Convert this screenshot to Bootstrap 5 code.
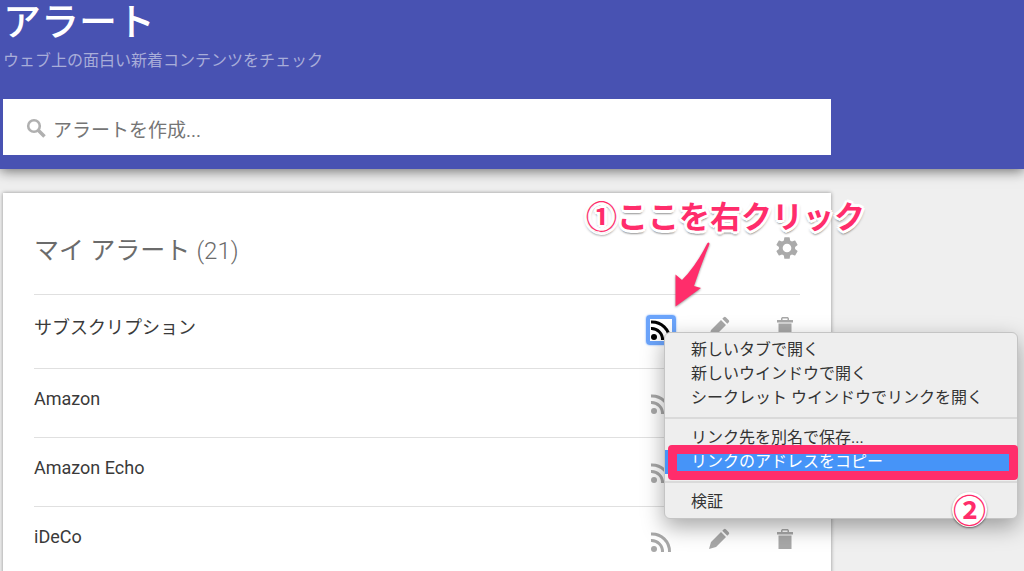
<!DOCTYPE html>
<html lang="ja">
<head>
<meta charset="utf-8">
<meta name="viewport" content="width=device-width, initial-scale=1">
<title>アラート</title>
<link href="https://cdn.jsdelivr.net/npm/bootstrap@5.3.0/dist/css/bootstrap.min.css" rel="stylesheet">
<style>
  :root { --pink: #ff2d6b; --column: 81.1%; }
  body { background: #efefef; color: #333; font-family: Roboto, "Noto Sans CJK JP", sans-serif; }
  .masthead { background: #4852b2; padding: 0 0 14px 3px; box-shadow: 0 2px 12px rgba(0,0,0,.55); z-index: 1; }
  .masthead h1 { font-size: 38px; line-height: 44px; font-weight: 500; }
  .masthead p { font-size: 16px; line-height: 24px; margin: 5px 0 26px; color: #a8add9; }
  .search-bar { width: var(--column); height: 56px; padding-left: 23px; gap: 7px; }
  .search-bar svg { margin-top: 2px; }
  .search-bar input { font-size: 19px; line-height: 28px; color: #444; padding: 8px 0 0; }
  .search-bar input::placeholder { color: #757575; opacity: 1; }
  .page-body { padding: 24px 0 0 3px; }
  .panel { width: var(--column); padding: 0 31px; box-shadow: 0 0 4px rgba(0,0,0,.4); }
  .panel-head { height: 101px; padding: 42px 0 0; }
  .panel-head h2 { font-size: 25px; line-height: 32px; font-weight: 400; color: #6b6b6b; }
  .panel-head .count { font-size: 24px; font-weight: 300; }
  .gear { color: #aaa; width: 26px; height: 26px; line-height: 0; }
  .alert-row { height: 69px; border-top: 1px solid #e0e0e0; }
  .alert-row.first-row { height: 74px; }
  .alert-name { font-size: 18px; line-height: 24px; padding-top: 18px; color: #3a3a3a; }
  .first-row .alert-name { padding-top: 21px; }
  .row-tools { gap: 32px; padding-top: 20px; }
  .tool { width: 30px; height: 30px; color: #a8a8a8; line-height: 0; border-radius: 4px; }
  .tool.edit, .tool.trash { padding-bottom: 6px !important; }
  .tool.edit { text-align: left; }
  .tool.focused { color: #000; border: 4px solid #6ba4fb !important; box-shadow: 0 0 2px #6ba4fb; }
  .ctx-menu { left: 18px; top: 17px; width: 354px; padding: 5px 0 4px; background: #eee; border: 1px solid #c4c4c4; border-radius: 6px; box-shadow: 0 8px 22px rgba(0,0,0,.35); z-index: 5; }
  .ctx-menu button { display: block; height: 24px; padding: 0 0 0 26px; font-size: 16px; line-height: 24px; color: #333; }
  .ctx-menu hr { margin: 7px 0; border-top: 2px solid #dadada; opacity: 1; }
  .ctx-menu .chosen button { background: #4694f8; color: #fff; }
  .ctx-menu .chosen::after { content: ""; position: absolute; inset: -5px -1px -6px 3px; border: 9px solid var(--pink); border-radius: 4px; pointer-events: none; }
  .note { color: var(--pink); font-family: "Noto Sans CJK JP", sans-serif; font-weight: 700; }
  .note-one { left: -60px; top: -122px; font-size: 31px; line-height: 44px; z-index: 6;
    text-shadow: 3px 0 #fff, -3px 0 #fff, 0 3px #fff, 0 -3px #fff, 2px 2px #fff, -2px 2px #fff, 2px -2px #fff, -2px -2px #fff, 0 4px 2px rgba(0,0,0,.35), 2px 2px 3px rgba(0,0,0,.3), -2px 2px 3px rgba(0,0,0,.3); }
  .note-arrow { left: 24px; top: -75px; filter: drop-shadow(0 1px 1px rgba(0,0,0,.4)); }
  .note-two { right: 30px; bottom: -9px; width: 35px; height: 35px; font-size: 33px; line-height: 34px; background: #fff; box-shadow: 0 1px 2px rgba(0,0,0,.5); }
</style>
</head>
<body class="vh-100 d-flex flex-column overflow-hidden">

<svg class="d-none" aria-hidden="true">
  <symbol id="rss" viewBox="0 0 22 22"><circle cx="4" cy="18" r="3" fill="currentColor"/><path d="M1 9.500A11 11 0 0 1 12.500 21M1 3A17.500 17.500 0 0 1 19.500 21" fill="none" stroke="currentColor" stroke-width="3"/></symbol>
  <symbol id="pencil" viewBox="0 0 22 22"><path d="M1 21l2-7L13 4l5 5L8 19zM14.300 2.700l1.500-1.500q1-.9 2 0l3 3q.9 1 0 2l-1.500 1.500z" fill="currentColor"/></symbol>
  <symbol id="bin" viewBox="0 0 16 21"><path d="M5 0h6l1 1.500V3h4v2.500H0V3h4V1.500zM5.500 1.500V3h5V1.500zM1.500 6.500h13V20h-13z" fill="currentColor" fill-rule="evenodd"/></symbol>
</svg>

<header class="masthead position-relative">
  <h1 class="text-white m-0">アラート</h1>
  <p>ウェブ上の面白い新着コンテンツをチェック</p>
  <form class="search-bar bg-white d-flex align-items-center" role="search">
    <svg width="20" height="20" viewBox="0 0 20 20" fill="none" stroke="#b0b0b0" aria-hidden="true"><circle cx="8" cy="8" r="5.800" stroke-width="2.600"/><path d="M12 12l6.500 6.500" stroke-width="3.600"/></svg>
    <input class="flex-grow-1 border-0 bg-transparent" type="text" aria-label="アラートを作成" placeholder="アラートを作成...">
  </form>
</header>

<main class="page-body flex-grow-1 d-flex">
  <section class="panel bg-white">
    <div class="panel-head d-flex justify-content-between align-items-start">
      <h2 class="m-0">マイ アラート <span class="count">(21)</span></h2>
      <button class="gear btn border-0 p-0" type="button" aria-label="設定">
        <svg width="26" height="26" viewBox="0 0 24 24" fill="currentColor"><path d="M19.430 12.980c.04-.32.07-.64.07-.98s-.03-.66-.07-.98l2.110-1.650c.19-.15.24-.42.12-.64l-2-3.460c-.12-.22-.39-.3-.61-.22l-2.490 1c-.52-.4-1.080-.73-1.690-.98l-.38-2.650C14.460 2.180 14.250 2 14 2h-4c-.25 0-.46.18-.49.42l-.38 2.650c-.61.25-1.170.59-1.690.98l-2.490-1c-.23-.09-.49 0-.61.22l-2 3.460c-.13.22-.07.49.12.64l2.110 1.650c-.04.32-.07.65-.07.98s.03.66.07.98l-2.110 1.650c-.19.15-.24.42-.12.64l2 3.460c.12.22.39.3.61.22l2.490-1c.52.4 1.080.73 1.690.98l.38 2.650c.03.24.24.42.49.42h4c.25 0 .46-.18.49-.42l.38-2.650c.61-.25 1.170-.59 1.690-.98l2.490 1c.23.09.49 0 .61-.22l2-3.460c.12-.22.07-.49-.12-.64zM12 16a4 4 0 1 1 0-8 4 4 0 0 1 0 8z"/></svg>
      </button>
    </div>

    <ul class="list-unstyled m-0">
      <li class="alert-row first-row d-flex justify-content-between align-items-start">
        <span class="alert-name">サブスクリプション</span>
        <div class="row-tools d-flex">
          <div class="position-relative">
            <button class="tool focused btn p-0" type="button" aria-label="フィード"><svg width="22" height="22"><use href="#rss"/></svg></button>
            <div class="note note-one position-absolute text-nowrap">①ここを右クリック</div>
            <svg class="note-arrow position-absolute" width="42" height="70" viewBox="0 0 42 70" aria-hidden="true"><path d="M37.500 3Q39.500 1.500 39.500 4Q31 25 24 46L31 48L5.500 66.500V34.500L12 40Q26 26 37.500 3Z" fill="#ff2d6b"/></svg>
            <div class="ctx-menu position-absolute">
              <ul class="list-unstyled m-0">
                <li><button class="btn border-0 rounded-0 w-100 text-start" type="button">新しいタブで開く</button></li>
                <li><button class="btn border-0 rounded-0 w-100 text-start" type="button">新しいウインドウで開く</button></li>
                <li><button class="btn border-0 rounded-0 w-100 text-start" type="button">シークレット ウインドウでリンクを開く</button></li>
                <li><hr></li>
                <li><button class="btn border-0 rounded-0 w-100 text-start" type="button">リンク先を別名で保存...</button></li>
                <li class="chosen position-relative"><button class="btn border-0 rounded-0 w-100 text-start" type="button">リンクのアドレスをコピー</button></li>
                <li><hr></li>
                <li><button class="btn border-0 rounded-0 w-100 text-start" type="button">検証</button></li>
              </ul>
              <div class="note note-two position-absolute rounded-circle text-center">②</div>
            </div>
          </div>
          <button class="tool edit btn border-0 p-0" type="button" aria-label="編集"><svg width="22" height="22"><use href="#pencil"/></svg></button>
          <button class="tool trash btn border-0 p-0" type="button" aria-label="削除"><svg width="16" height="21"><use href="#bin"/></svg></button>
        </div>
      </li>
      <li class="alert-row d-flex justify-content-between align-items-start">
        <span class="alert-name">Amazon</span>
        <div class="row-tools d-flex">
          <button class="tool btn border-0 p-0" type="button" aria-label="フィード"><svg width="22" height="22"><use href="#rss"/></svg></button>
          <button class="tool edit btn border-0 p-0" type="button" aria-label="編集"><svg width="22" height="22"><use href="#pencil"/></svg></button>
          <button class="tool trash btn border-0 p-0" type="button" aria-label="削除"><svg width="16" height="21"><use href="#bin"/></svg></button>
        </div>
      </li>
      <li class="alert-row d-flex justify-content-between align-items-start">
        <span class="alert-name">Amazon Echo</span>
        <div class="row-tools d-flex">
          <button class="tool btn border-0 p-0" type="button" aria-label="フィード"><svg width="22" height="22"><use href="#rss"/></svg></button>
          <button class="tool edit btn border-0 p-0" type="button" aria-label="編集"><svg width="22" height="22"><use href="#pencil"/></svg></button>
          <button class="tool trash btn border-0 p-0" type="button" aria-label="削除"><svg width="16" height="21"><use href="#bin"/></svg></button>
        </div>
      </li>
      <li class="alert-row d-flex justify-content-between align-items-start">
        <span class="alert-name">iDeCo</span>
        <div class="row-tools d-flex">
          <button class="tool btn border-0 p-0" type="button" aria-label="フィード"><svg width="22" height="22"><use href="#rss"/></svg></button>
          <button class="tool edit btn border-0 p-0" type="button" aria-label="編集"><svg width="22" height="22"><use href="#pencil"/></svg></button>
          <button class="tool trash btn border-0 p-0" type="button" aria-label="削除"><svg width="16" height="21"><use href="#bin"/></svg></button>
        </div>
      </li>
    </ul>
  </section>
</main>
<script src="https://cdn.jsdelivr.net/npm/bootstrap@5.3.0/dist/js/bootstrap.bundle.min.js"></script>
</body>
</html>
